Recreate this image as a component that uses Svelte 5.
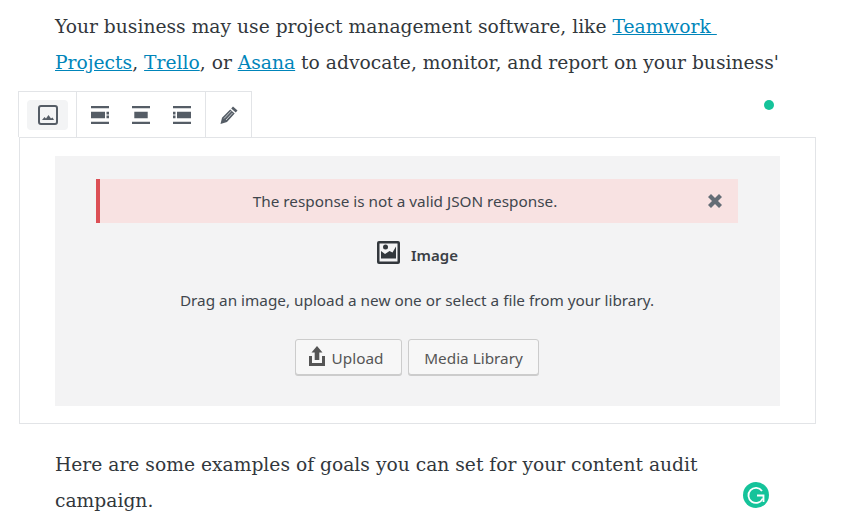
<script>
  const alignIcons = [
    'M1 1h18v2.300H1V1zm0 18h18v-2.300H1V19zm0-5.700h14V6.700H1v6.600zm15.500-3.800H19V6.700h-2.500v2.800zm0 3.800H19v-2.800h-2.500v2.800z',
    'M1 1h18v2.300H1V1zm0 18h18v-2.300H1V19zm2.300-5.700h13.400V6.700H3.300v6.600z',
    'M1 1h18v2.300H1V1zm0 18h18v-2.300H1V19zm4-5.700h14V6.700H5v6.600zM1 9.500h2.500V6.700H1v2.800zm0 3.800h2.500v-2.800H1v2.800z'
  ]
</script>

<div class="page">
  <p>
    Your business may use project management software, like <a href="#t">Teamwork&nbsp;</a><br />
    <a href="#t">Projects</a>, <a href="#l">Trello</a>, or <a href="#a">Asana</a> to advocate, monitor, and report on your business'
    goals.
  </p>

  <div class="block">
    <div class="toolbar">
      <div class="group first">
        <button class="tool active" aria-label="Image">
          <svg width="20" height="20" viewBox="0 0 20 20">
            <rect x="1" y="1" width="18" height="18" rx="2" fill="none" stroke="#555d66" stroke-width="2" />
            <path d="M4 15l2.500-3 1.500 1.500 2.500-3.500 2.500 3.500 1.500-1 1.500 2.500z" fill="#555d66" />
          </svg>
        </button>
      </div>
      <div class="group aligns">
        {#each alignIcons as d}
          <button class="tool" aria-label="Align">
            <svg width="20" height="20" viewBox="0 0 20 20"><path {d} fill="#555d66" /></svg>
          </button>
        {/each}
      </div>
      <div class="group last">
        <button class="tool" aria-label="Edit">
          <svg width="20" height="20" viewBox="0 0 20 20">
            <path d="M14 1.500l4.500 4-1.800 2-4.500-4zM11.200 4.500l4.500 4L8 17l-6.500 2 1.500-6.300z" fill="#555d66" />
            <path d="M5 13.500l7-7.300M7 15l6.500-7" stroke="#fff" stroke-width=".7" fill="none" />
          </svg>
        </button>
      </div>
    </div>

    <div class="placeholder">
      <div class="notice">
        <span class="notice-text">The response is not a valid JSON response.</span>
        <svg class="close" width="16" height="16" viewBox="0 0 16 16">
          <path d="M1 4l3-3 4 4 4-4 3 3-4 4 4 4-3 3-4-4-4 4-3-3 4-4z" fill="#646d76" />
        </svg>
      </div>
      <div class="label">
        <svg width="23" height="23" viewBox="0 0 23 23">
          <rect width="23" height="23" rx="2" fill="#32373c" />
          <path d="M2.500 2.500h18v18h-18z" fill="#f3f3f4" />
          <circle cx="8.500" cy="6" r="2.500" fill="#32373c" />
          <path d="M4 17.500V10l4 3 4.500-3 3 1.500 3.500-6v12z" fill="#32373c" />
        </svg>
        <span>Image</span>
      </div>
      <div class="instructions">Drag an image, upload a new one or select a file from your library.</div>
      <div class="buttons">
        <button class="btn upload">
          <svg width="16" height="20" viewBox="0 0 16 20">
            <path d="M8 0l5.500 6.500H10.300V14H5.700V6.500H2.500zM0 10h3v7h10v-7h3v10H0z" fill="#555" />
          </svg>
          Upload
        </button>
        <button class="btn media">Media Library</button>
      </div>
    </div>
  </div>

  <p class="after">Here are some examples of goals you can set for your content audit<br />campaign.</p>

  <span class="dot"></span>
  <span class="grammarly">
    <svg width="26" height="26" viewBox="0 0 26 26">
      <circle cx="13" cy="13" r="13" fill="#15c39a" />
      <path d="M19 9a7.500 7.500 0 1 0 .8 7.500" fill="none" stroke="#fff" stroke-width="1.800" />
      <path d="M14 13.500h6.500V20" fill="none" stroke="#fff" stroke-width="1.800" />
    </svg>
  </span>
</div>

<style>
  :global(body) {
    margin: 0;
    background: #fff;
  }

  .page {
    position: relative;
    width: 845px;
    height: 526px;
    overflow: hidden;
    padding-top: 9px;
    box-sizing: border-box;
  }

  p {
    margin: 0 0 0 55px;
    width: 740px;
    height: 110px;
    font-family: "DejaVu Serif", serif;
    font-size: 18.7px;
    line-height: 36px;
    color: #32373c;
  }

  p a {
    color: #0085ba;
    text-decoration: underline;
  }

  .after {
    height: auto;
    margin-top: 23px;
  }

  .block {
    position: relative;
    margin: 18px 0 0 19px;
    width: 797px;
    height: 287px;
    box-sizing: border-box;
    border: 1px solid #e2e4e7;
    background: #fff;
    padding: 18px 35px;
  }

  .toolbar {
    position: absolute;
    left: -2px;
    top: -47px;
    display: flex;
    height: 46px;
    box-sizing: border-box;
    border: 1px solid #e2e4e7;
    border-bottom: 0;
    background: #fff;
  }

  .group {
    display: flex;
    align-items: center;
    border-right: 1px solid #e2e4e7;
  }

  .group.first {
    padding: 0 8px;
  }

  .group.aligns {
    gap: 1px;
    padding: 0 3px;
  }

  .group.last {
    border-right: 0;
    padding: 0 2px 0 3px;
  }

  .tool {
    display: flex;
    align-items: center;
    justify-content: center;
    width: 40px;
    height: 30px;
    padding: 0;
    border: 0;
    border-radius: 4px;
    background: none;
  }

  .tool.active {
    width: 41px;
    background: #f3f4f5;
  }

  .placeholder {
    display: flex;
    flex-direction: column;
    align-items: center;
    height: 250px;
    padding: 23px 42px 0 41px;
    box-sizing: border-box;
    background: #f3f3f4;
    font-family: "Noto Sans", sans-serif;
    font-size: 15.3px;
    color: #444;
  }

  .notice {
    display: flex;
    align-items: center;
    align-self: stretch;
    height: 44px;
    box-sizing: border-box;
    padding-right: 15px;
    border-left: 4px solid #dc4f55;
    background: #f8e2e2;
  }

  .notice-text {
    flex: 1;
    text-align: center;
    color: #40464d;
    line-height: 47px;
  }

  .close {
    margin-left: -3px;
    margin-top: -1px;
  }

  .label {
    display: flex;
    align-items: center;
    gap: 11px;
    margin-top: 18px;
    margin-left: 1px;
    font-weight: 600;
    font-size: 15px;
    color: #3b4045;
  }

  .label span {
    position: relative;
    top: 2px;
  }

  .instructions {
    margin-top: 25px;
    line-height: 22px;
    color: #40464d;
  }

  .buttons {
    display: flex;
    gap: 6px;
    margin-top: 28px;
  }

  .btn {
    display: flex;
    align-items: center;
    justify-content: center;
    height: 36px;
    padding: 1px 0 0;
    box-sizing: border-box;
    border: 1px solid #ccc;
    border-radius: 3px;
    background: #f7f7f7;
    box-shadow: 0 1px 0 #ccc;
    font-family: "Noto Sans", sans-serif;
    font-size: 15.3px;
    color: #555;
  }

  .upload {
    width: 107px;
    gap: 7px;
    padding-right: 5px;
  }

  .upload svg {
    position: relative;
    top: -2px;
  }

  .media {
    width: 131px;
  }

  .dot {
    position: absolute;
    left: 764px;
    top: 100px;
    width: 10px;
    height: 10px;
    border-radius: 50%;
    background: #15c39a;
  }

  .grammarly {
    position: absolute;
    left: 743px;
    top: 482px;
    width: 26px;
    height: 26px;
  }
</style>
